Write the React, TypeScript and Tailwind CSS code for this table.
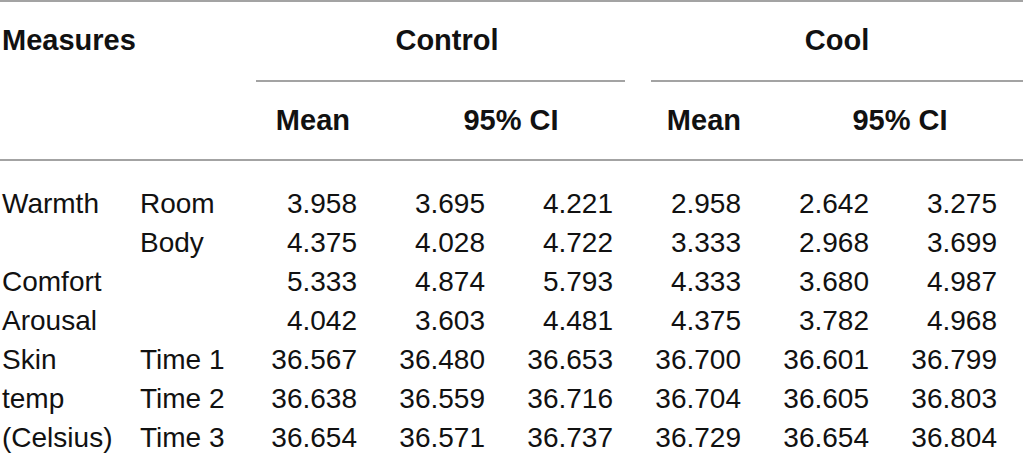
const rows = [
  { a: "Warmth", b: "Room", v: ["3.958", "3.695", "4.221", "2.958", "2.642", "3.275"] },
  { a: "", b: "Body", v: ["4.375", "4.028", "4.722", "3.333", "2.968", "3.699"] },
  { a: "Comfort", b: "", v: ["5.333", "4.874", "5.793", "4.333", "3.680", "4.987"] },
  { a: "Arousal", b: "", v: ["4.042", "3.603", "4.481", "4.375", "3.782", "4.968"] },
  { a: "Skin", b: "Time 1", v: ["36.567", "36.480", "36.653", "36.700", "36.601", "36.799"] },
  { a: "temp", b: "Time 2", v: ["36.638", "36.559", "36.716", "36.704", "36.605", "36.803"] },
  { a: "(Celsius)", b: "Time 3", v: ["36.654", "36.571", "36.737", "36.729", "36.654", "36.804"] },
];

const cols = "grid grid-cols-[138px_117px_repeat(6,128px)]";

export default function App() {
  return (
    <div className="w-[1023px] h-[455px] overflow-hidden bg-white text-[#111] font-['Liberation_Sans',Arial,sans-serif]">
      <div className="h-[2px] bg-[#a3a3a3]" />

      {/* group headings */}
      <div className={`${cols} h-[78px] items-center text-[29px] font-bold`}>
        <div className="col-span-2 pl-[2px]">Measures</div>
        <div className="col-span-3 text-center">Control</div>
        <div className="col-span-3 text-center pl-3">Cool</div>
      </div>
      <div className={`${cols} h-[2px]`}>
        <div className="col-span-2" />
        <div className="col-span-3 ml-px mr-[14px] bg-[#a3a3a3]" />
        <div className="col-span-3 ml-[12px] bg-[#a3a3a3]" />
      </div>

      {/* sub headings */}
      <div className={`${cols} h-[77px] items-center text-[29px] font-bold`}>
        <div className="col-span-2" />
        <div className="text-right pr-[33px]">Mean</div>
        <div className="col-span-2 text-center">95% CI</div>
        <div className="text-right pr-[26px]">Mean</div>
        <div className="col-span-2 text-center pl-[10px]">95% CI</div>
      </div>
      <div className="h-[2px] bg-[#a3a3a3]" />

      {/* body */}
      <div className="pt-[22px] text-[28px]">
        {rows.map((r, i) => (
          <div key={i} className={`${cols} h-[39px] items-center`}>
            <div className="pl-[2px]">{r.a}</div>
            <div className="pl-[2px]">{r.b}</div>
            {r.v.map((n, j) => (
              <div key={j} className="text-right pr-[26px]">
                {n}
              </div>
            ))}
          </div>
        ))}
      </div>
    </div>
  );
}
